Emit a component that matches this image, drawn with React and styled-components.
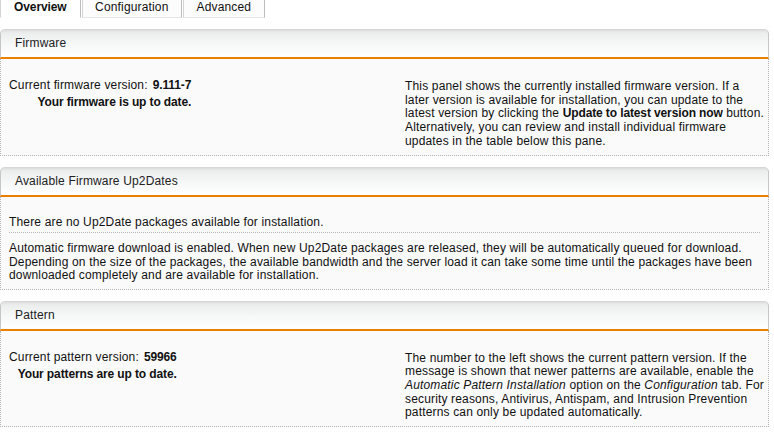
import React from "react";
import styled, { createGlobalStyle } from "styled-components";

const GlobalStyle = createGlobalStyle`
  html, body { margin: 0; padding: 0; background: #ffffff; }
  body {
    font-family: "Liberation Sans", Arial, sans-serif;
    font-size: 12px;
    letter-spacing: 0.16px;
    color: #111111;
  }
  * { box-sizing: border-box; }
`;

const Page = styled.div`
  padding-right: 5px;
  display: flex;
  flex-direction: column;
`;

const TabBar = styled.div`
  display: flex;
  gap: 1px;
  height: 18px;
  margin-bottom: 11px;
`;

const Tab = styled.div`
  height: 18px;
  padding: 0 ${(p) => (p.$active ? "13px" : "12.5px")};
  line-height: 14px;
  font-weight: ${(p) => (p.$active ? "bold" : "normal")};
  letter-spacing: ${(p) => (p.$active ? "-0.1px" : "0.16px")};
  background: ${(p) => (p.$active ? "#ffffff" : "#fcfcfc")};
  border-left: 1px solid #d4d4d4;
  border-right: 1px solid #bdbdbd;
  border-bottom: 1px solid ${(p) => (p.$active ? "#ffffff" : "#e6e6e6")};
  color: #111;
`;

const Panel = styled.section`
  display: flex;
  flex-direction: column;
  margin-bottom: 11px;
`;

const PanelHeader = styled.div`
  height: 30px;
  line-height: 27px;
  padding-left: 14px;
  border: 1px solid #c6c6c6;
  border-top-color: #d6d6d6;
  border-bottom: 2px solid #e98000;
  border-radius: 5px 5px 0 0;
  background: linear-gradient(to bottom, #dcdcdc 0px, #eceeee 3px, #f6f7f7 14px, #ffffff 27px);
  color: #222;
`;

const PanelBody = styled.div`
  background: #fafafa;
  border: 1px dotted #b4b4b4;
  border-top: none;
  padding: ${(p) => p.$pad || "18px 0 6px 0"};
`;

const TwoCol = styled.div`
  display: grid;
  grid-template-columns: 384px 1fr;
`;

const LeftCell = styled.div`
  padding-left: 8px;
`;

const RightCell = styled.div`
  padding: 3px 2px 0 20px;
  line-height: 13.7px;
`;

const StatusBlock = styled.div`
  display: inline-flex;
  flex-direction: column;
  align-items: flex-end;
  line-height: 17px;
`;

const StatusLine = styled.div`
  display: flex;
  gap: 5px;
`;

const Strong = styled.b`
  font-weight: bold;
  letter-spacing: -0.12px;
`;

const Note = styled.p`
  margin: 0 8px;
  line-height: 13.5px;
  padding: ${(p) => p.$pad || "0"};
  border-bottom: ${(p) => (p.$sep ? "1px dotted #b4b4b4" : "none")};
`;

export default function App() {
  return (
    <>
      <GlobalStyle />
      <Page>
        <TabBar>
          <Tab $active>Overview</Tab>
          <Tab>Configuration</Tab>
          <Tab>Advanced</Tab>
        </TabBar>

        <Panel>
          <PanelHeader>Firmware</PanelHeader>
          <PanelBody>
            <TwoCol>
              <LeftCell>
                <StatusBlock>
                  <StatusLine>
                    <span>Current firmware version:</span>
                    <Strong>9.111-7</Strong>
                  </StatusLine>
                  <Strong>Your firmware is up to date.</Strong>
                </StatusBlock>
              </LeftCell>
              <RightCell>
                This panel shows the currently installed firmware version. If a later version is
                available for installation, you can update to the latest version by clicking the{" "}
                <Strong>Update to latest version now</Strong> button. Alternatively, you can review
                and install individual firmware updates in the table below this pane.
              </RightCell>
            </TwoCol>
          </PanelBody>
        </Panel>

        <Panel>
          <PanelHeader>Available Firmware Up2Dates</PanelHeader>
          <PanelBody $pad="19px 0 6px 0">
            <Note $sep $pad="0 0 3px 0">There are no Up2Date packages available for installation.</Note>
            <Note $pad="9px 0 0 0">
              Automatic firmware download is enabled. When new Up2Date packages are released, they
              will be automatically queued for download. Depending on the size of the packages, the
              available bandwidth and the server load it can take some time until the packages have
              been downloaded completely and are available for installation.
            </Note>
          </PanelBody>
        </Panel>

        <Panel>
          <PanelHeader>Pattern</PanelHeader>
          <PanelBody>
            <TwoCol>
              <LeftCell>
                <StatusBlock>
                  <StatusLine>
                    <span>Current pattern version:</span>
                    <Strong>59966</Strong>
                  </StatusLine>
                  <Strong>Your patterns are up to date.</Strong>
                </StatusBlock>
              </LeftCell>
              <RightCell>
                The number to the left shows the current pattern version. If the message is shown
                that newer patterns are available, enable the <i>Automatic Pattern Installation</i>{" "}
                option on the <i>Configuration</i> tab. For security reasons, Antivirus, Antispam,
                and Intrusion Prevention patterns can only be updated automatically.
              </RightCell>
            </TwoCol>
          </PanelBody>
        </Panel>
      </Page>
    </>
  );
}
